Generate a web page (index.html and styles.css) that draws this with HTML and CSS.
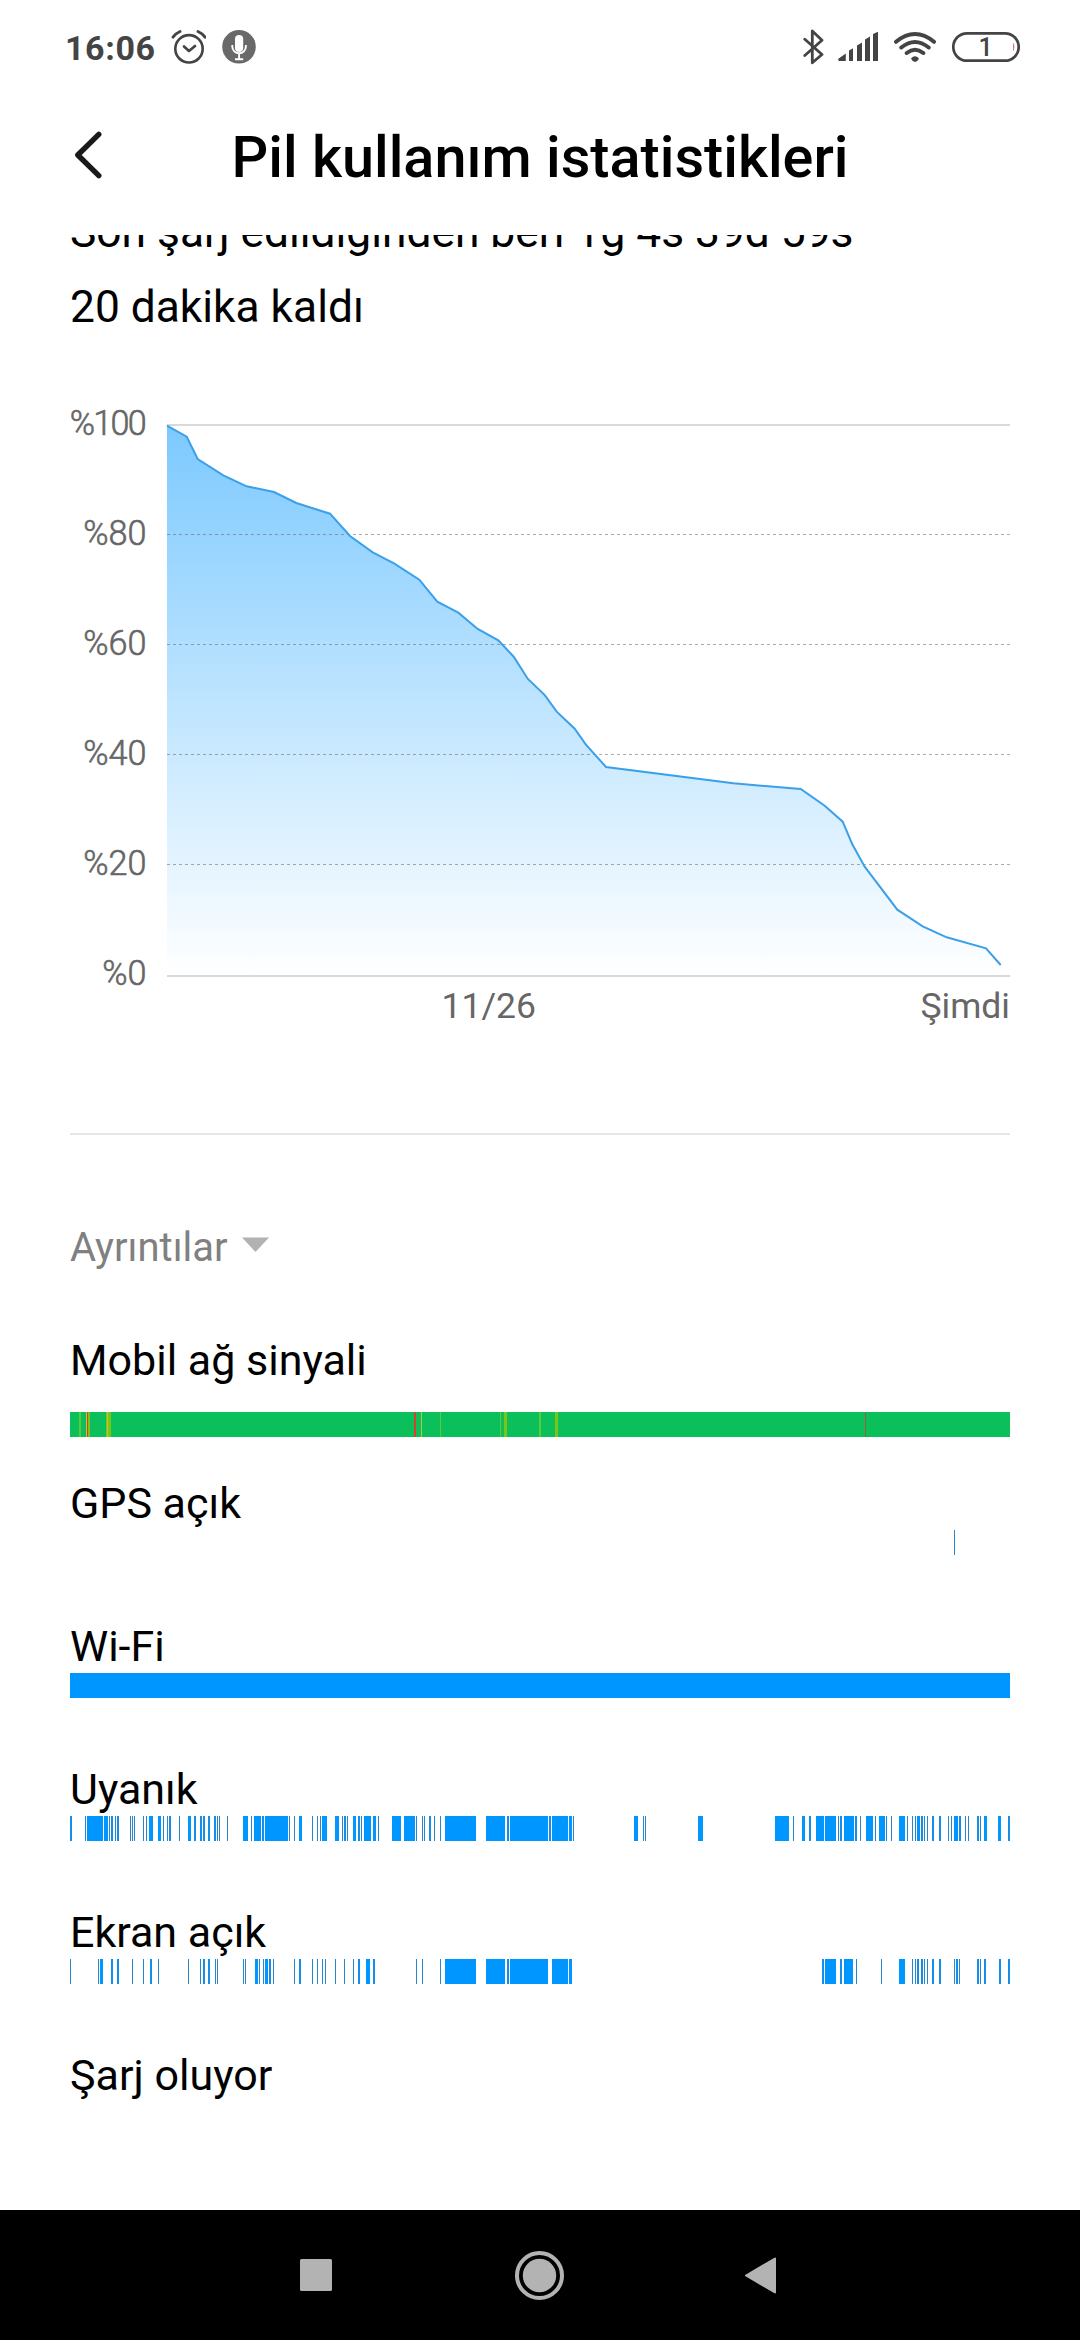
FILE: index.html
```html
<!DOCTYPE html>
<html lang="tr">
<head>
<meta charset="utf-8">
<title>Pil kullanım istatistikleri</title>
<link rel="stylesheet" href="styles.css">
</head>
<body>
<div class="screen">
  <header class="status">
    <span class="clock">16:06</span>
    <svg class="ic" width="35" height="36" viewBox="171 29 35 36">
      <g fill="none" stroke="#444" stroke-linecap="round" stroke-linejoin="round">
        <circle cx="189" cy="48.8" r="13.7" stroke-width="2.6"/>
        <path d="M184 46.5l5 4.5 6-5" stroke-width="2.7"/>
        <path d="M173 37.2q3-4 7-5.700M198 31.500q4.500 2 7 5.700" stroke-width="2.900"/>
      </g>
    </svg>
    <svg class="ic mic" width="34" height="36" viewBox="222 29 34 36">
      <circle cx="239" cy="46.800" r="16.800" fill="#696969"/>
      <rect x="235" y="35" width="8.200" height="17" rx="4.100" fill="#fff"/>
      <path d="M232.300 45v1.500a6.800 6.800 0 0 0 13.600 0V45M239.100 53.300V59M235 59.200h8.200" fill="none" stroke="#fff" stroke-width="1.900"/>
    </svg>
    <div class="right">
      <svg width="22" height="36" viewBox="803 29 22 36"><path d="M804.800 39.300l17.200 15.200-9.700 8.300V31l9.700 9.300-17.200 15.200" fill="none" stroke="#444" stroke-width="2.800" stroke-linejoin="round" stroke-linecap="round"/></svg>
      <svg width="40" height="36" viewBox="838 29 40 36"><path d="M838 59l7.800-5.500V61h-7zM849 50.500l4-2.300V61H849zM857 45.500l5-3V61h-5zM865 39.500l5-3V61h-5zM873 34l5-2.200V61h-5z" fill="#444"/></svg>
      <svg width="42" height="36" viewBox="894 29 42 36"><g fill="none" stroke="#444" stroke-width="4" stroke-linecap="round"><path d="M896 41.800q19-15.500 38 0M901.300 47.500q13.700-11 27.400 0M906.700 53q8.300-6.500 16.600 0"/></g><path d="M911 58.500q4-4.300 8 0-1 2.700-4 3.600-3-.900-4-3.600z" fill="#444"/></svg>
      <svg width="68" height="36" viewBox="952 29 68 36"><rect x="953.300" y="33.300" width="65.400" height="27.400" rx="13.700" fill="none" stroke="#444" stroke-width="2.700"/><path d="M1013.500 43.500q1 3 0 7z" fill="#d33" stroke="#c55" stroke-width=".5"/><text class="lvl" x="985.500" y="55.700" text-anchor="middle">1</text></svg>
    </div>
  </header>

  <div class="bar">
    <svg class="back" width="30" height="50" viewBox="73 130 30 50"><path d="M98.800 134.300L77.800 155l21 20.700" fill="none" stroke="#1a1a1a" stroke-width="5.400" stroke-linecap="round" stroke-linejoin="round"/></svg>
    <h1>Pil kullanım istatistikleri</h1>
    <span class="spacer"></span>
  </div>

  <main class="scroll">
    <div class="summary">
      <p>Son şarj edildiğinden beri 1g 4s 39d 59s</p>
      <p>20 dakika kaldı</p>
    </div>

    <svg class="chart" width="1080" height="706" viewBox="0 344 1080 706">
      <defs><linearGradient id="g" x1="0" y1="425" x2="0" y2="975" gradientUnits="userSpaceOnUse"><stop offset="0" stop-color="#7cc9ff"/><stop offset="1" stop-color="#fff"/></linearGradient></defs>
      <path d="M167 425h843M167 976h843" stroke="#d9d9d9" stroke-width="2"/>
      <path d="M167 425.700L186.700 436.700 197.700 459 223.300 475.300 246.700 486.300 274 492 296.300 503 330 513.700 350 536 372.700 552.300 394 563.300 419.300 579.700 437.300 601.700 458.300 612.700 477.700 629 498.300 640.300 513.700 656.700 527.700 678.700 545 695.300 556.700 711.700 574.700 728.700 585.700 744.300 606 767 733.300 783.300 800.700 789 824.700 805.700 842.700 821.700 852.300 844.300 864.700 866.700 897.300 909.700 922.700 926.300 946.700 937.300 986 948.300 1000.700 965V975H167z" fill="url(#g)"/>
      <path d="M167 534.500h843M167 644.500h843M167 754.500h843M167 864.500h843" stroke="#646464" stroke-opacity=".55" stroke-width="1" stroke-dasharray="3 3"/>
      <path d="M167 425.700L186.700 436.700 197.700 459 223.300 475.300 246.700 486.300 274 492 296.300 503 330 513.700 350 536 372.700 552.300 394 563.300 419.300 579.700 437.300 601.700 458.300 612.700 477.700 629 498.300 640.300 513.700 656.700 527.700 678.700 545 695.300 556.700 711.700 574.700 728.700 585.700 744.300 606 767 733.300 783.300 800.700 789 824.700 805.700 842.700 821.700 852.300 844.300 864.700 866.700 897.300 909.700 922.700 926.300 946.700 937.300 986 948.300 1000.700 965" fill="none" stroke="#3aa0ea" stroke-width="2"/>
      <g class="pct" text-anchor="end">
        <text class="tight" x="145" y="434.700">%100</text>
        <text x="146.500" y="545">%80</text>
        <text x="146.500" y="655">%60</text>
        <text x="146.500" y="765">%40</text>
        <text x="146.500" y="875">%20</text>
        <text x="146.500" y="984.700">%0</text>
      </g>
      <g class="axis">
        <text x="441.500" y="1018">11/26</text>
        <text x="1010" y="1018" text-anchor="end">Şimdi</text>
      </g>
    </svg>

    <hr>
    <div class="details">Ayrıntılar<svg width="27" height="15" viewBox="0 0 27 15"><path d="M0 .5h27L13.500 15z" fill="#b2b2b2"/></svg></div>

    <section class="rows">
      <div class="row signal"><h2>Mobil ağ sinyali</h2>
        <svg class="strip" viewBox="70 -12.500 940 25">
          <path class="green" d="M70 0H1010"/>
          <path class="lime" d="M79 0h2M440 0h1M500 0h1M539 0h2"/>
          <path class="olive" d="M88 0h2M106 0h5M504 0h3M555 0h3"/>
          <path class="amber" d="M86 0h1M107 0h1M421 0h1"/>
          <path class="red" d="M87 0h1M414 0h2"/>
          <path class="brown" d="M865 0h1"/>
        </svg>
      </div>
      <div class="row"><h2>GPS açık</h2>
        <svg class="strip" viewBox="70 -12.500 940 25"><path class="thin" d="M954 0h1"/></svg>
      </div>
      <div class="row"><h2>Wi-Fi</h2>
        <svg class="strip" viewBox="70 -12.500 940 25"><path class="blue" d="M70 0H1010"/></svg>
      </div>
      <div class="row"><h2>Uyanık</h2>
        <svg class="strip" viewBox="70 -12.500 940 25">
          <path class="blue" d="M87 0H103M104 0H108M149 0H153M158 0H161M188 0H191M243 0H248M254 0H261M265 0H288M299 0H302M322 0H327M335 0H339M353 0H356M364 0H371M373 0H376M392 0H401M404 0H415M445 0H476M486 0H505M510 0H548M552 0H568M569 0H572M634 0H638M698 0H703M775 0H789M802 0H805M816 0H824M825 0H836M844 0H854M866 0H873M879 0H885M899 0H905M917 0H920M954 0H958M984 0H987M998 0H1001"/>
          <path class="mid" d="M70 0h2M111 0h2M117 0h2M169 0h2M194 0h2M200 0h2M203 0h2M208 0h2M214 0h2M262 0h2M344 0h2M358 0h2M429 0h2M507 0h2M549 0h2M809 0h2M840 0h2M855 0h2M921 0h2M932 0h2M939 0h2M959 0h2M977 0h2M1008 0h2"/>
          <path class="thin" d="M85 0h1M109 0h1M115 0h1M130 0h1M132 0h1M134 0h1M143 0h1M146 0h1M163 0h1M167 0h1M179 0h1M217 0h1M219 0h1M227 0h1M251 0h1M289 0h1M294 0h1M312 0h1M317 0h1M320 0h1M342 0h1M347 0h1M361 0h1M378 0h1M416 0h1M422 0h1M424 0h1M434 0h1M440 0h1M573 0h1M643 0h1M645 0h1M793 0h1M838 0h1M860 0h1M875 0h1M886 0h1M891 0h1M907 0h1M912 0h1M915 0h1M924 0h1M927 0h1M948 0h1M951 0h1M965 0h1M968 0h1M980 0h1"/>
        </svg>
      </div>
      <div class="row"><h2>Ekran açık</h2>
        <svg class="strip" viewBox="70 -12.500 940 25">
          <path class="blue" d="M100 0H103M255 0H258M265 0H268M366 0H370M445 0H476M486 0H505M510 0H548M552 0H568M569 0H572M825 0H836M844 0H853M899 0H905"/>
          <path class="mid" d="M111 0h2M117 0h2M150 0h2M203 0h2M208 0h2M269 0h2M299 0h2M358 0h2M373 0h2M507 0h2M822 0h2M840 0h2M917 0h2M921 0h2M932 0h2M939 0h2M956 0h2M977 0h2M984 0h2M999 0h2M1008 0h2"/>
          <path class="thin" d="M70 0h1M98 0h1M132 0h1M143 0h1M158 0h1M188 0h1M200 0h1M215 0h1M217 0h1M243 0h1M245 0h1M259 0h1M263 0h1M273 0h1M294 0h1M312 0h1M317 0h1M322 0h1M325 0h1M335 0h1M344 0h1M353 0h1M416 0h1M422 0h1M440 0h1M856 0h1M881 0h1M912 0h1M915 0h1M924 0h1M927 0h1M954 0h1M959 0h1M980 0h1"/>
        </svg>
      </div>
      <div class="row"><h2>Şarj oluyor</h2></div>
    </section>
  </main>

  <nav class="nav">
    <svg width="480" height="50" viewBox="299 2250 480 50" fill="#b3b3b3">
      <rect x="300" y="2259" width="32" height="32" rx="1.500"/>
      <circle cx="539.500" cy="2275.500" r="16.700"/>
      <circle cx="539.500" cy="2275.500" r="22.500" fill="none" stroke="#b3b3b3" stroke-width="4"/>
      <path d="M746 2275.500L775 2258.500v34z" stroke="#b3b3b3" stroke-width="2" stroke-linejoin="round"/>
    </svg>
  </nav>
</div>
</body>
</html>
```
FILE: styles.css
```css
* { box-sizing: border-box; }
body { margin: 0; background: #fff; font-family: Roboto, "Noto Sans", sans-serif; color: #000; }
h1, h2, p { margin: 0; font-weight: 400; }
svg { display: block; flex: none; }

.screen { width: 1080px; height: 2340px; display: flex; flex-direction: column; overflow: hidden; }

.status { height: 94px; flex: none; display: flex; align-items: center; padding: 0 60px 0 65px; }
.clock { width: 106px; font-size: 34px; font-weight: 700; letter-spacing: .6px; line-height: 40px; color: #444; margin-top: 2px; }
.mic { margin-left: 16px; }
.right { margin-left: auto; display: flex; align-items: center; }
.right svg + svg { margin-left: 16px; }
.right svg:nth-child(2) { margin-left: 13px; }
.lvl { font-size: 25px; font-weight: 500; fill: #444; }

.bar { height: 126px; flex: none; display: flex; align-items: center; justify-content: space-between; padding: 0 73px; }
.back { margin-top: -4px; }
.bar h1 { padding-top: 2px; font-size: 57.600px; font-weight: 500; line-height: 80px; white-space: nowrap; }
.spacer { width: 30px; }

.scroll { flex: 1; margin-top: 15px; overflow: hidden; min-height: 0; }
.summary { margin: -40px 70px -1px; font-size: 44.300px; line-height: 75px; }

.pct { font-size: 34.200px; font-weight: 300; fill: #666; stroke: #666; stroke-width: .6px; }
.tight { letter-spacing: -1.700px; }
.axis { font-size: 35.500px; fill: #666; }

hr { height: 2px; margin: 83px 70px 0; border: 0; background: #e6e6e6; }
.details { display: flex; align-items: center; gap: 14px; margin: 83px 70px 0; font-size: 40px; line-height: 60px; color: #808080; }
.details svg { margin-bottom: 7px; }

.rows { margin: 56px 70px 0; }
.row { height: 143px; }
.row h2 { font-size: 43px; line-height: 53px; }
.strip { width: 940px; height: 25px; fill: none; stroke-width: 25px; shape-rendering: crispEdges; }
.signal .strip { margin-top: 25px; }
.blue { stroke: #0096ff; }
.mid { stroke: #148ee8; }
.thin { stroke: #2a86cb; }
.green { stroke: #0bbf5b; }
.lime { stroke: #5ccb35; }
.olive { stroke: #7dc418; }
.amber { stroke: #b8c83a; }
.red { stroke: #d8402f; }
.brown { stroke: #a35a3c; }

.nav { height: 130px; flex: none; background: #000; display: flex; align-items: center; padding-left: 299px; }
```
